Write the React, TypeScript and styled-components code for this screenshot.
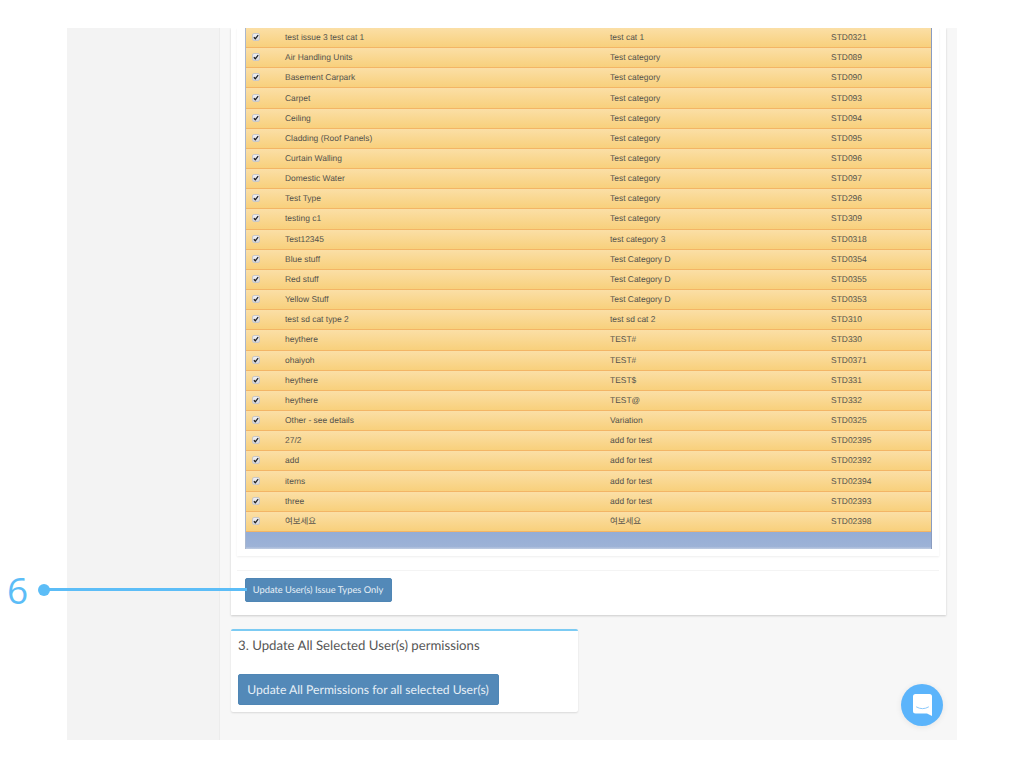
import React from "react";
import styled, { createGlobalStyle } from "styled-components";

const Global = createGlobalStyle`
  html, body { margin: 0; padding: 0; background: #fff; }
  #root { width: 1024px; height: 768px; overflow: hidden; position: relative; }
`;

const Frame = styled.div`
  width: 890px;
  height: 712px;
  margin: 28px 0 0 67px;
  display: flex;
  overflow: hidden;
  background: #f7f7f7;
`;
const Sidebar = styled.aside`
  width: 152px;
  flex: none;
  background: #f3f3f3;
  border-right: 1px solid #ececec;
`;
const Content = styled.main`
  flex: 1;
  padding: 0 11px;
  display: flex;
  flex-direction: column;
  align-items: flex-start;
`;
const MainCard = styled.section`
  width: 715px;
  height: 587px;
  flex: none;
  background: #fff;
  box-shadow: 0 1px 2px rgba(0, 0, 0, 0.18);
  padding: 0 7px 0 6px;
  box-sizing: border-box;
`;
const TablePanel = styled.div`
  height: 528px;
  padding: 0 7px 0 8px;
  background: #fff;
  box-sizing: border-box;
  box-shadow: 0 1px 2px rgba(0, 0, 0, 0.07);
`;
const Table = styled.div`
  border-left: 1px solid #a9b7cf;
  border-right: 1px solid #8a9cc0;
  font-family: "Liberation Sans", Arial, "Noto Sans CJK KR", sans-serif;
  font-size: 8.45px;
  text-rendering: geometricPrecision;
  color: #55534c;
`;
const Row = styled.div`
  height: 20.17px;
  box-sizing: border-box;
  padding-bottom: 1px;
  display: grid;
  grid-template-columns: 39px 325px 221px 1fr;
  align-items: center;
  background: linear-gradient(#fbdfa6, #f8d07c);
  border-bottom: 1px solid #f3b566;
`;
const CheckCell = styled.div`
  display: flex;
  padding-left: 5.5px;
`;
const CheckBox = styled.span`
  width: 6px;
  height: 6px;
  border: 1px solid #c8c8ca;
  border-radius: 2px;
  background: linear-gradient(#f0f0f2, #d8d8dc);
  display: flex;
  align-items: center;
  justify-content: center;
`;
const Footer = styled.div`
  height: 17px;
  background: linear-gradient(#94add6 0%, #9db2d6 85%, #c0cde2 100%);
`;
const Divider = styled.hr`
  margin: 14px 0 7px 0;
  border: 0;
  border-top: 1px solid #f4f4f4;
`;
const SmallButton = styled.button`
  display: block;
  margin-left: 7.5px;
  width: 147px;
  height: 23.5px;
  padding: 0;
  border: 1px solid #4f86b5;
  border-radius: 2px;
  background: #5389b8;
  color: #e6eff6;
  font-family: Lato, "Open Sans", sans-serif;
  font-size: 9.3px;
  text-rendering: geometricPrecision;
  white-space: nowrap;
`;
const PermCard = styled.section`
  width: 347px;
  height: 83px;
  margin-top: 14px;
  flex: none;
  box-sizing: border-box;
  background: #fff;
  border-top: 2px solid #7ccbf3;
  border-radius: 2px;
  box-shadow: 0 1px 2px rgba(0, 0, 0, 0.12);
  padding: 6px 7px;
`;
const PermTitle = styled.h3`
  margin: 0;
  height: 17px;
  line-height: 17px;
  font-family: Lato, "Open Sans", sans-serif;
  font-weight: 400;
  font-size: 13.2px;
  text-rendering: geometricPrecision;
  color: #555;
  white-space: nowrap;
`;
const BigButton = styled.button`
  display: block;
  margin-top: 19.5px;
  margin-left: -0.5px;
  width: 261px;
  height: 31.5px;
  padding: 0;
  border: 1px solid #4f86b5;
  border-radius: 2px;
  background: #5389b8;
  color: #e6eff6;
  font-family: Lato, "Open Sans", sans-serif;
  font-size: 12.15px;
  text-rendering: geometricPrecision;
  white-space: nowrap;
`;
const CalloutNumber = styled.div`
  position: absolute;
  left: 7px;
  top: 568px;
  font-family: "Open Sans", sans-serif;
  font-weight: 400;
  font-size: 37px;
  line-height: 44px;
  color: #5cbdf7;
`;
const CalloutDot = styled.div`
  position: absolute;
  left: 37.5px;
  top: 583.5px;
  width: 12px;
  height: 12px;
  border-radius: 50%;
  background: #5cbdf7;
`;
const CalloutLine = styled.div`
  position: absolute;
  left: 44px;
  top: 588px;
  width: 203px;
  height: 3px;
  background: #5cbdf7;
`;
const Chat = styled.div`
  position: absolute;
  left: 901px;
  top: 684px;
  width: 42px;
  height: 42px;
  border-radius: 50%;
  background: #5bb4fb;
  box-shadow: 0 1px 6px rgba(0, 0, 0, 0.08);
  display: flex;
  align-items: center;
  justify-content: center;
`;

const rows: [string, string, string][] = [
  ["test issue 3 test cat 1", "test cat 1", "STD0321"],
  ["Air Handling Units", "Test category", "STD089"],
  ["Basement Carpark", "Test category", "STD090"],
  ["Carpet", "Test category", "STD093"],
  ["Ceiling", "Test category", "STD094"],
  ["Cladding (Roof Panels)", "Test category", "STD095"],
  ["Curtain Walling", "Test category", "STD096"],
  ["Domestic Water", "Test category", "STD097"],
  ["Test Type", "Test category", "STD296"],
  ["testing c1", "Test category", "STD309"],
  ["Test12345", "test category 3", "STD0318"],
  ["Blue stuff", "Test Category D", "STD0354"],
  ["Red stuff", "Test Category D", "STD0355"],
  ["Yellow Stuff", "Test Category D", "STD0353"],
  ["test sd cat type 2", "test sd cat 2", "STD310"],
  ["heythere", "TEST#", "STD330"],
  ["ohaiyoh", "TEST#", "STD0371"],
  ["heythere", "TEST$", "STD331"],
  ["heythere", "TEST@", "STD332"],
  ["Other - see details", "Variation", "STD0325"],
  ["27/2", "add for test", "STD02395"],
  ["add", "add for test", "STD02392"],
  ["items", "add for test", "STD02394"],
  ["three", "add for test", "STD02393"],
  ["여보세요", "여보세요", "STD02398"],
];

const Tick = () => (
  <svg width="6" height="6" viewBox="0 0 7 7">
    <path d="M1 3.8 L2.7 5.6 L6 1.2" fill="none" stroke="#222" strokeWidth="1.5" />
  </svg>
);

const ChatIcon = () => (
  <svg width="19" height="22" viewBox="0 0 19 22">
    <path d="M2.5 0 H16.5 A2.5 2.5 0 0 1 19 2.5 V22 L14 19.5 H2.5 A2.5 2.5 0 0 1 0 17 V2.5 A2.5 2.5 0 0 1 2.5 0 Z" fill="#fff" />
    <path d="M3.5 13 Q9.5 16.5 15.5 13" fill="none" stroke="#8cc9fb" strokeWidth="1" strokeLinecap="round" />
  </svg>
);

export default function App() {
  return (
    <>
      <Global />
      <Frame>
        <Sidebar />
        <Content>
          <MainCard>
            <TablePanel>
              <Table>
                {rows.map(([name, cat, code], i) => (
                  <Row key={i}>
                    <CheckCell>
                      <CheckBox><Tick /></CheckBox>
                    </CheckCell>
                    <span>{name}</span>
                    <span>{cat}</span>
                    <span>{code}</span>
                  </Row>
                ))}
                <Footer />
              </Table>
            </TablePanel>
            <Divider />
            <SmallButton>Update User(s) Issue Types Only</SmallButton>
          </MainCard>
          <PermCard>
            <PermTitle>3. Update All Selected User(s) permissions</PermTitle>
            <BigButton>Update All Permissions for all selected User(s)</BigButton>
          </PermCard>
        </Content>
      </Frame>
      <CalloutNumber>6</CalloutNumber>
      <CalloutLine />
      <CalloutDot />
      <Chat><ChatIcon /></Chat>
    </>
  );
}
